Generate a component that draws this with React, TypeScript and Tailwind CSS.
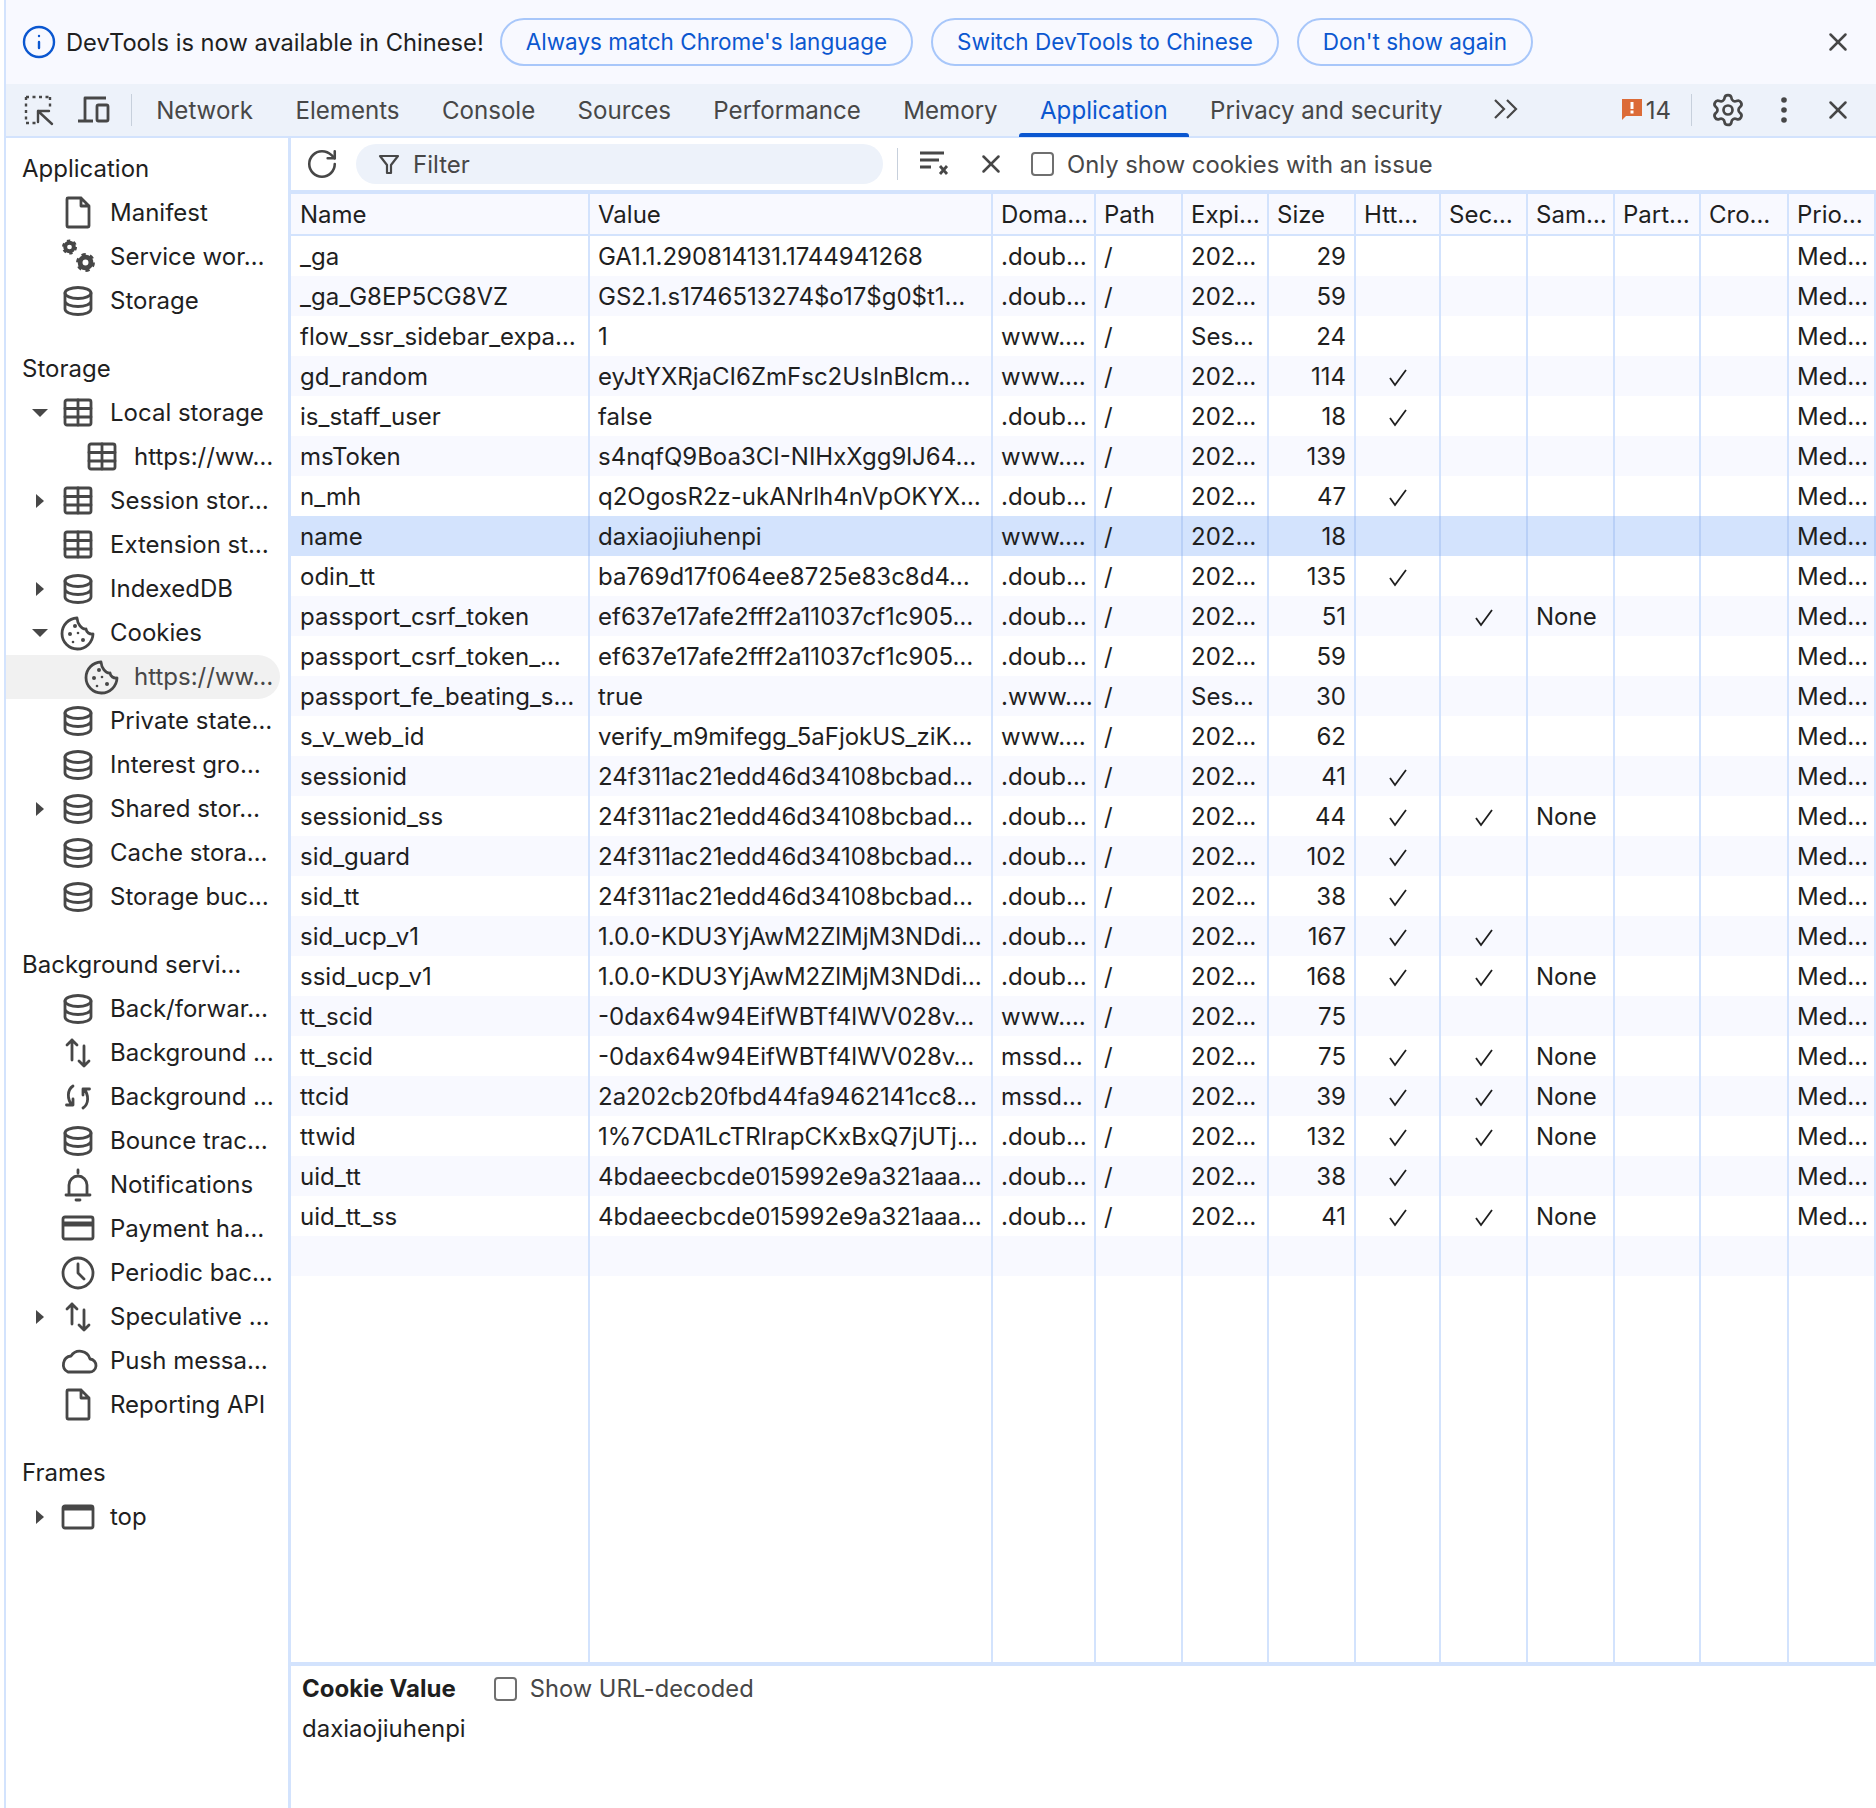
import { Info, RotateCw, Settings, X } from "lucide-react";
import type { ReactNode } from "react";

const S = { fill: "none", stroke: "#474747", strokeWidth: 2.8, strokeLinecap: "round", strokeLinejoin: "round" } as const;

const Svg = ({ children }: { children: ReactNode }) => (
  <svg width="40" height="40" viewBox="0 0 40 40" className="shrink-0">
    <g {...S}>{children}</g>
  </svg>
);

const Gear = ({ cx, cy, r }: { cx: number; cy: number; r: number }) => (
  <g>
    <circle cx={cx} cy={cy} r={r} strokeWidth={r * 0.9} strokeLinecap="butt" />
    <circle
      cx={cx}
      cy={cy}
      r={r * 1.45}
      strokeWidth={r * 0.6}
      strokeLinecap="butt"
      strokeDasharray={`${r * 0.75} ${r * 0.77}`}
    />
  </g>
);

const icons: Record<string, ReactNode> = {
  doc: <path d="M10 5h13l8 8v20a1 1 0 0 1-1 1H10a1 1 0 0 1-1-1V6a1 1 0 0 1 1-1zM23 5v8h8" />,
  gears: (
    <>
      <Gear cx={11.500} cy={10} r={4.300} />
      <Gear cx={27.500} cy={25.500} r={5.400} />
    </>
  ),
  db: (
    <>
      <ellipse cx="20" cy="12" rx="13" ry="5.500" />
      <path d="M7 12v16c0 3.200 6 5.500 13 5.500s13-2.300 13-5.500V12M7 20c0 3.200 6 5.500 13 5.500s13-2.300 13-5.500" />
    </>
  ),
  table: (
    <>
      <rect x="7" y="7" width="26" height="25" rx="2" />
      <path d="M7 15.500h26M7 24h26M20 7v25" />
    </>
  ),
  cookie: (
    <>
      <path d="M19 5A15.500 15.500 0 1 0 35 21c-3.500.500-6.500-1.500-7-5-4.500.500-8.500-5-9-11z" />
      <g fill="#474747" stroke="none">
        <circle cx="17" cy="13" r="2" />
        <circle cx="12" cy="21" r="2" />
        <circle cx="20" cy="20" r="1.300" />
        <circle cx="25" cy="27" r="2" />
        <circle cx="15" cy="29" r="1.300" />
      </g>
    </>
  ),
  updown: <path d="M14 27V7M9 12l5-5 5 5M26 13v20M21 28l5 5 5-5" />,
  sync: <path d="M15 9c-6 4-6 13-1 19M8.500 28H15v-6M25 31c6-4 6-13 1-19M31.500 12H25v6" />,
  bell: (
    <>
      <path d="M8 30h24M11 30V20a9 9 0 0 1 18 0v10M20 8V5" />
      <path d="M18 35h4" />
    </>
  ),
  card: (
    <>
      <rect x="5" y="8" width="30" height="22" rx="2" />
      <path d="M5 15h30" strokeWidth="5" strokeLinecap="butt" />
    </>
  ),
  clock: (
    <>
      <circle cx="20" cy="20" r="15" />
      <path d="M20 11v9l6 6" />
    </>
  ),
  cloud: <path d="M10 31h21a6.500 6.500 0 0 0 1-13 10.500 10.500 0 0 0-19-3 8.500 8.500 0 0 0-3 16z" />,
  frame: (
    <>
      <rect x="5" y="9" width="30" height="22" rx="2" />
      <path d="M5 11.500h30" strokeWidth="4" strokeLinecap="butt" />
    </>
  ),
};

const Arrow = ({ dir }: { dir?: "right" | "down" }) => (
  <svg width="20" height="20" viewBox="0 0 20 20" className="shrink-0">
    {dir === "right" && <polygon points="6,3 14,10 6,17" fill="#474747" />}
    {dir === "down" && <polygon points="2,6 18,6 10,14" fill="#474747" />}
  </svg>
);

type Item = { label: string; icon: string; arrow?: "right" | "down"; nested?: boolean; selected?: boolean };

const sidebar: { title: string; items: Item[] }[] = [
  {
    title: "Application",
    items: [
      { label: "Manifest", icon: "doc" },
      { label: "Service wor…", icon: "gears" },
      { label: "Storage", icon: "db" },
    ],
  },
  {
    title: "Storage",
    items: [
      { label: "Local storage", icon: "table", arrow: "down" },
      { label: "https://ww…", icon: "table", nested: true },
      { label: "Session stor…", icon: "table", arrow: "right" },
      { label: "Extension st…", icon: "table" },
      { label: "IndexedDB", icon: "db", arrow: "right" },
      { label: "Cookies", icon: "cookie", arrow: "down" },
      { label: "https://ww…", icon: "cookie", nested: true, selected: true },
      { label: "Private state…", icon: "db" },
      { label: "Interest gro…", icon: "db" },
      { label: "Shared stor…", icon: "db", arrow: "right" },
      { label: "Cache stora…", icon: "db" },
      { label: "Storage buc…", icon: "db" },
    ],
  },
  {
    title: "Background servi…",
    items: [
      { label: "Back/forwar…", icon: "db" },
      { label: "Background …", icon: "updown" },
      { label: "Background …", icon: "sync" },
      { label: "Bounce trac…", icon: "db" },
      { label: "Notifications", icon: "bell" },
      { label: "Payment ha…", icon: "card" },
      { label: "Periodic bac…", icon: "clock" },
      { label: "Speculative …", icon: "updown", arrow: "right" },
      { label: "Push messa…", icon: "cloud" },
      { label: "Reporting API", icon: "doc" },
    ],
  },
  { title: "Frames", items: [{ label: "top", icon: "frame", arrow: "right" }] },
];

const tabs = ["Network", "Elements", "Console", "Sources", "Performance", "Memory", "Application", "Privacy and security"];

const columns = ["Name", "Value", "Doma…", "Path", "Expi…", "Size", "Htt…", "Sec…", "Sam…", "Part…", "Cro…", "Prio…"];

const gridCols = "grid grid-cols-[299px_403px_103px_87px_86px_87px_85px_87px_87px_86px_88px_87px]";

// name, value, domain, expires, size, http, secure, samesite
type Cookie = [string, string, string, string, number, boolean, boolean, boolean];

const h24 = "24f311ac21edd46d34108bcbad…";
const cookies: Cookie[] = [
  ["_ga", "GA1.1.290814131.1744941268", ".doub…", "202…", 29, false, false, false],
  ["_ga_G8EP5CG8VZ", "GS2.1.s1746513274$o17$g0$t1…", ".doub…", "202…", 59, false, false, false],
  ["flow_ssr_sidebar_expa…", "1", "www.…", "Ses…", 24, false, false, false],
  ["gd_random", "eyJtYXRjaCI6ZmFsc2UsInBlcm…", "www.…", "202…", 114, true, false, false],
  ["is_staff_user", "false", ".doub…", "202…", 18, true, false, false],
  ["msToken", "s4nqfQ9Boa3CI-NIHxXgg9lJ64…", "www.…", "202…", 139, false, false, false],
  ["n_mh", "q2OgosR2z-ukANrlh4nVpOKYX…", ".doub…", "202…", 47, true, false, false],
  ["name", "daxiaojiuhenpi", "www.…", "202…", 18, false, false, false],
  ["odin_tt", "ba769d17f064ee8725e83c8d4…", ".doub…", "202…", 135, true, false, false],
  ["passport_csrf_token", "ef637e17afe2fff2a11037cf1c905…", ".doub…", "202…", 51, false, true, true],
  ["passport_csrf_token_…", "ef637e17afe2fff2a11037cf1c905…", ".doub…", "202…", 59, false, false, false],
  ["passport_fe_beating_s…", "true", ".www.…", "Ses…", 30, false, false, false],
  ["s_v_web_id", "verify_m9mifegg_5aFjokUS_ziK…", "www.…", "202…", 62, false, false, false],
  ["sessionid", h24, ".doub…", "202…", 41, true, false, false],
  ["sessionid_ss", h24, ".doub…", "202…", 44, true, true, true],
  ["sid_guard", h24, ".doub…", "202…", 102, true, false, false],
  ["sid_tt", h24, ".doub…", "202…", 38, true, false, false],
  ["sid_ucp_v1", "1.0.0-KDU3YjAwM2ZlMjM3NDdi…", ".doub…", "202…", 167, true, true, false],
  ["ssid_ucp_v1", "1.0.0-KDU3YjAwM2ZlMjM3NDdi…", ".doub…", "202…", 168, true, true, true],
  ["tt_scid", "-0dax64w94EifWBTf4lWV028v…", "www.…", "202…", 75, false, false, false],
  ["tt_scid", "-0dax64w94EifWBTf4lWV028v…", "mssd…", "202…", 75, true, true, true],
  ["ttcid", "2a202cb20fbd44fa9462141cc8…", "mssd…", "202…", 39, true, true, true],
  ["ttwid", "1%7CDA1LcTRIrapCKxBxQ7jUTj…", ".doub…", "202…", 132, true, true, true],
  ["uid_tt", "4bdaeecbcde015992e9a321aaa…", ".doub…", "202…", 38, true, false, false],
  ["uid_tt_ss", "4bdaeecbcde015992e9a321aaa…", ".doub…", "202…", 41, true, true, true],
];

const Tick = () => (
  <svg width="20" height="20" viewBox="0 0 20 20" className="mx-auto">
    <path d="M2 11l5 7L18 3" fill="none" stroke="#1f1f1f" strokeWidth="1.800" />
  </svg>
);

const Cell = ({ children, right, selected }: { children?: ReactNode; right?: boolean; selected?: boolean }) => (
  <div
    className={`flex h-full items-center overflow-hidden whitespace-nowrap border-r-2 px-[8px] pt-[2px] ${
      right ? "justify-end" : ""
    } ${selected ? "border-[#b9d0f7]" : "border-[#d3e3fd]"}`}
  >
    {children}
  </div>
);

const Checkbox = () => <div className="h-[24px] w-[23px] shrink-0 rounded-[4px] border-2 border-[#6f6f6f] bg-white" />;

export default function App() {
  return (
    <div className="flex h-[1808px] w-[1876px] flex-col overflow-hidden bg-white pl-[4px] font-[Inter,sans-serif] text-[24px] text-[#1f1f1f]">
      <div className="flex h-full flex-col border-l-2 border-[#d3e3fd]">
        {/* infobar */}
        <div className="flex h-[84px] shrink-0 items-center bg-[#f8f9ff] pl-[15px]">
          <Info size={36} strokeWidth={1.600} className="text-[#0b57d0]" />
          <span className="ml-[9px] pt-[1px] text-[23.700px]">DevTools is now available in Chinese!</span>
          <div className="ml-[16px] flex gap-[18px]">
            {["Always match Chrome's language", "Switch DevTools to Chinese", "Don't show again"].map((b) => (
              <button
                key={b}
                className="h-[48px] rounded-full border-2 border-[#a8c7fa] px-[24px] text-[22.500px] text-[#0b57d0]"
              >
                {b}
              </button>
            ))}
          </div>
          <X size={30} strokeWidth={2} className="ml-auto mr-[23px] text-[#474747]" />
        </div>

        {/* tab bar */}
        <div className="flex h-[54px] shrink-0 items-center border-b-2 border-[#d3e3fd] bg-[#edf2fa] text-[#474747]">
          <svg width="32" height="32" viewBox="0 0 32 32" className="ml-[17px]">
            <g {...S} strokeWidth="2.400">
              <path d="M3 3h24" strokeDasharray="3 3.500" strokeLinecap="butt" />
              <path d="M3 3v25" strokeDasharray="3 3.500" strokeLinecap="butt" />
              <path d="M3 29h10M27 3v11" strokeDasharray="3 3.500" strokeLinecap="butt" />
              <path d="M15 17h11M15 17v11M15 17l14 13" />
            </g>
          </svg>
          <svg width="36" height="32" viewBox="0 0 36 32" className="ml-[21px]">
            <g {...S} strokeWidth="2.800" strokeLinecap="butt">
              <path d="M30 4H9v23M2 27h15" />
              <rect x="21" y="11" width="11" height="16" rx="1.500" />
            </g>
          </svg>
          <div className="ml-[19px] h-[32px] w-px bg-[#c7d0dc]" />
          <div className="ml-[3px] flex h-full">
            {tabs.map((t) => (
              <div
                key={t}
                className={`relative flex h-full items-center px-[21.200px] pt-[3px] text-[24.100px] ${
                  t === "Application" ? "text-[#0b57d0]" : ""
                }`}
              >
                {t}
                {t === "Application" && (
                  <div className="absolute bottom-[-1px] left-0 right-0 h-[4px] rounded-t-[3px] bg-[#0b57d0]" />
                )}
              </div>
            ))}
          </div>
          <svg width="28" height="24" viewBox="0 0 28 24" className="ml-[28px] mb-[3px]">
            <path d="M3 3l9 9-9 9M15 3l9 9-9 9" fill="none" stroke="#474747" strokeWidth="2.200" />
          </svg>
          <div className="ml-auto flex items-center">
            <svg width="22" height="22" viewBox="0 0 22 22" className="mb-[3px]">
              <path d="M1 1h20v17H5l-4 4z" fill="#dc6b37" />
              <rect x="9.500" y="4" width="3" height="7" fill="#fff" />
              <rect x="9.500" y="12.500" width="3" height="3" fill="#fff" />
            </svg>
            <span className="ml-[3px] pt-[2px]">14</span>
            <div className="ml-[20px] h-[32px] w-px bg-[#c7d0dc]" />
            <Settings size={36} strokeWidth={1.800} className="ml-[18px]" />
            <svg width="8" height="28" viewBox="0 0 8 28" className="ml-[34px]">
              <circle cx="4" cy="4" r="2.800" fill="#474747" />
              <circle cx="4" cy="14" r="2.800" fill="#474747" />
              <circle cx="4" cy="24" r="2.800" fill="#474747" />
            </svg>
            <X size={30} strokeWidth={2} className="ml-[35px] mr-[23px]" />
          </div>
        </div>

        <div className="flex min-h-0 flex-1">
          {/* sidebar */}
          <div className="w-[285px] shrink-0 border-r-[3px] border-[#d3e3fd] pt-[9px]">
            {sidebar.map((sec) => (
              <div key={sec.title} className="mb-[24px]">
                <div className="flex h-[44px] items-center pl-[16px]">{sec.title}</div>
                {sec.items.map((item, i) => (
                  <div
                    key={i}
                    className={`flex h-[44px] items-center whitespace-nowrap ${
                      item.nested ? "pl-[76px]" : "pl-[24px]"
                    } ${item.selected ? "mr-[8px] rounded-r-full bg-[#f1f1f1] text-[#474747]" : ""}`}
                  >
                    {!item.nested && (
                      <div className="mr-[8px]">
                        <Arrow dir={item.arrow} />
                      </div>
                    )}
                    <Svg>{icons[item.icon]}</Svg>
                    <span className="ml-[12px]">{item.label}</span>
                  </div>
                ))}
              </div>
            ))}
          </div>

          {/* main */}
          <div className="flex min-w-0 flex-1 flex-col">
            <div className="flex h-[52px] shrink-0 items-center">
              <RotateCw size={34} strokeWidth={1.800} className="ml-[14px] text-[#474747]" />
              <div className="ml-[17px] flex h-[40px] w-[527px] items-center rounded-full bg-[#edf2fa] pl-[22px] text-[#474747]">
                <svg width="22" height="22" viewBox="0 0 22 22">
                  <path d="M2 3h18l-7 9v8H9v-8z" fill="none" stroke="#474747" strokeWidth="2.200" strokeLinejoin="round" />
                </svg>
                <span className="ml-[13px] pt-[1px]">Filter</span>
              </div>
              <div className="ml-[14px] h-[32px] w-px bg-[#c7d0dc]" />
              <svg width="30" height="26" viewBox="0 0 30 26" className="ml-[21px] mb-[2px]">
                <path
                  d="M1 3h24M1 10h19M1 17h11M21 16l7 8M28 16l-7 8"
                  fill="none"
                  stroke="#474747"
                  strokeWidth="2.800"
                />
              </svg>
              <X size={30} strokeWidth={2} className="ml-[27px] text-[#474747]" />
              <div className="ml-[25px]">
                <Checkbox />
              </div>
              <span className="ml-[13px] pt-[1px] text-[23.800px] text-[#474747]">Only show cookies with an issue</span>
            </div>

            <div className="flex min-h-0 flex-1 flex-col border-y-4 border-[#d3e3fd]">
              <div className={`${gridCols} h-[42px] shrink-0 border-b-2 border-[#d3e3fd] bg-[#f8f9ff]`}>
                {columns.map((c, i) => (
                  <Cell key={c}>
                    <span className={i === 0 ? "ml-[1px]" : ""}>{c}</span>
                  </Cell>
                ))}
              </div>
              {cookies.map((c, i) => {
                const selected = c[0] === "name";
                return (
                  <div
                    key={i}
                    className={`${gridCols} h-[40px] shrink-0 ${
                      selected ? "bg-[#d3e3fd]" : i % 2 ? "bg-[#f8f9ff]" : "bg-white"
                    }`}
                  >
                    <Cell selected={selected}>
                      <span className="ml-[1px]">{c[0]}</span>
                    </Cell>
                    <Cell selected={selected}>{c[1]}</Cell>
                    <Cell selected={selected}>{c[2]}</Cell>
                    <Cell selected={selected}>/</Cell>
                    <Cell selected={selected}>{c[3]}</Cell>
                    <Cell selected={selected} right>
                      {c[4]}
                    </Cell>
                    <Cell selected={selected}>{c[5] && <Tick />}</Cell>
                    <Cell selected={selected}>{c[6] && <Tick />}</Cell>
                    <Cell selected={selected}>{c[7] && "None"}</Cell>
                    <Cell selected={selected} />
                    <Cell selected={selected} />
                    <Cell selected={selected}>Med…</Cell>
                  </div>
                );
              })}
              <div className={`${gridCols} h-[40px] shrink-0 bg-[#f8f9ff]`}>
                {columns.map((c) => (
                  <Cell key={c} />
                ))}
              </div>
              <div className={`${gridCols} min-h-0 flex-1`}>
                {columns.map((c) => (
                  <Cell key={c} />
                ))}
              </div>
            </div>

            {/* cookie preview */}
            <div className="h-[142px] shrink-0 pl-[11px] pt-[2px]">
              <div className="flex h-[41px] items-center">
                <span className="font-bold">Cookie Value</span>
                <div className="ml-[38px]">
                  <Checkbox />
                </div>
                <span className="ml-[13px] text-[23.700px] text-[#474747]">Show URL-decoded</span>
              </div>
              <div className="mt-[2px] flex h-[36px] items-center">daxiaojiuhenpi</div>
            </div>
          </div>
        </div>
      </div>
    </div>
  );
}
